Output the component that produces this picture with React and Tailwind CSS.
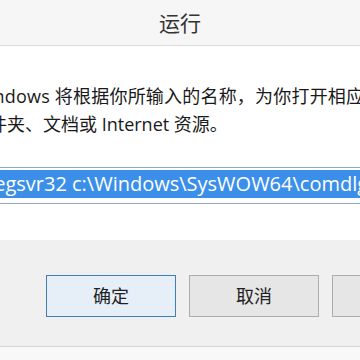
export default function App() {
  const font = { fontFamily: '"Open Sans", "Noto Sans CJK SC", sans-serif' };
  return (
    <div className="w-[360px] h-[360px] overflow-hidden bg-white flex flex-col" style={font}>
      {/* Title bar */}
      <div className="h-[46px] shrink-0 bg-[#f6f6f6] border-b border-[#d9d9d9] flex items-center justify-center">
        <span className="text-[21px] text-[#333] leading-none mt-[2px]">运行</span>
      </div>

      {/* Body */}
      <div className="h-[194px] shrink-0 bg-white overflow-hidden">
        <div className="pt-[36px] w-[440px] text-[18px] leading-[28px] text-[#1a1a1a] whitespace-nowrap">
          <p className="-ml-[28px] tracking-[0.2px]">Windows 将根据你所输入的名称，为你打开相应的程序、</p>
          <p className="-ml-[29px]">文件夹、文档或 Internet 资源。</p>
        </div>
        <div className="mt-[29px] -mx-[10px] h-[37px] border border-[#8fa8c2] bg-white pt-[2px] px-[2px]">
          <div className="h-[28px] bg-[#3b8fe8] text-white text-[20px] leading-[28px] whitespace-nowrap overflow-hidden pl-[3px]">
            <span className="-ml-[10px] inline-block">regsvr32 c:\Windows\SysWOW64\comdlg32.ocx</span>
          </div>
        </div>
      </div>

      {/* Button area */}
      <div className="h-[107px] shrink-0 bg-[#f0f0f0] border-b border-[#d5d5d5] pt-[35px] pl-[46px] flex gap-[13px]">
        <button className="w-[130px] h-[42px] shrink-0 border border-[#3f7fb3] bg-[#e6eff8] text-[18px] text-[#222]">
          确定
        </button>
        <button className="w-[130px] h-[42px] shrink-0 border border-[#adadad] bg-[#e6e6e6] text-[18px] text-[#222]">
          取消
        </button>
        <button className="w-[130px] h-[42px] shrink-0 border border-[#adadad] bg-[#e6e6e6] text-[18px] text-[#222]">
          浏览(B)...
        </button>
      </div>
      <div className="flex-1 bg-[#f8f8f8]" />
    </div>
  );
}
